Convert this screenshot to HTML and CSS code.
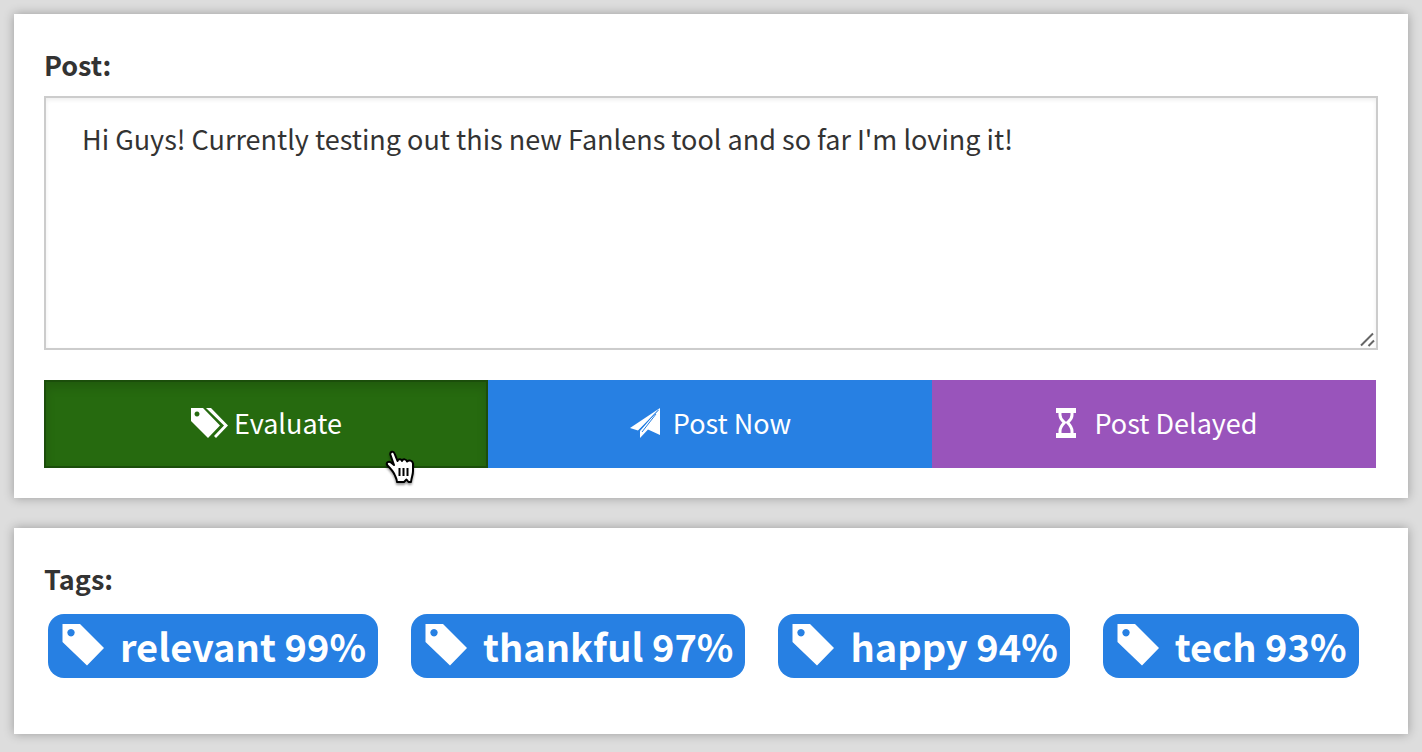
FILE: index.html
```html
<!DOCTYPE html>
<html lang="en">
<head>
<meta charset="utf-8">
<title>Post</title>
<link rel="stylesheet" href="styles.css">
</head>
<body>
<svg class="defs" aria-hidden="true">
  <symbol id="tag" viewBox="0 0 42 42">
    <path fill-rule="evenodd" d="M0.500 0H18L42 24 25 41.500 0.500 18ZM9 5a3.700 3.700 0 1 0 0.010 0Z"/>
  </symbol>
</svg>
<main class="page">
  <section class="panel">
    <label class="heading" for="post">Post:</label>
    <div class="editor">
      <textarea class="post-text" id="post">Hi Guys! Currently testing out this new Fanlens tool and so far I'm loving it!</textarea>
      <svg class="grip" viewBox="0 0 16 16" aria-hidden="true"><path d="M1 13.500 13 1.500M8.500 14 14 8.500"/></svg>
    </div>
    <div class="actions">
      <button class="action evaluate" type="button">
        <svg class="icon-tags" viewBox="0 0 38 30" aria-hidden="true"><path fill-rule="evenodd" d="M1 0H13L30 17.500 18 30 1 13ZM7 3.500a2.500 2.500 0 1 0 0.010 0Z"/><path d="M16 0H21L38 17.500 26 30 24 28 34 17.500Z"/></svg>
        <span>Evaluate</span>
        <svg class="cursor" viewBox="0 0 34 38" aria-hidden="true"><path d="M11.500 24.500C10 21 7.500 18.500 4.500 15.500 2.500 13 5.500 10.500 8 12.500L11 15 7.500 5C6.500 1.500 10.500 0.500 11.500 3.500L14.500 11C15 8.500 18.500 8.500 19 11 20 8.500 23.500 9 24 11.500 26 9.500 29.500 10.500 30 13.500L30 21C30 25 28.500 27 28 32H25.500L23.500 29.500 21 32H14C14 29 12.500 27 11.500 24.500Z"/><path class="creases" d="M16.500 18V26M20.500 18V26M24.500 18V26"/></svg>
      </button>
      <button class="action now" type="button">
        <svg class="icon-plane" viewBox="0 0 32 30" aria-hidden="true"><path d="M1 20 31 0 9 22.500ZM31 0V27L19 21.500 11 30V23Z"/><path class="fold" d="M29.500 2 10 22.500"/><path class="fold" d="M27 6 13 24"/></svg>
        <span>Post Now</span>
      </button>
      <button class="action delayed" type="button">
        <svg class="icon-glass" viewBox="0 0 20 30" aria-hidden="true"><path d="M0 0H20V5H0ZM0 25H20V30H0Z"/><path class="glass" d="M4 4V7C4 11 6.500 12.500 8.500 14.500 6 17 4 19 4 23V26M16 4V7C16 11 13.500 12.500 11.500 14.500 14 17 16 19 16 23V26"/></svg>
        <span>Post Delayed</span>
      </button>
    </div>
  </section>
  <section class="panel results">
    <h2 class="heading">Tags:</h2>
    <ul class="tags">
      <li class="tag"><svg class="icon-tag" aria-hidden="true"><use href="#tag"/></svg><span>relevant 99%</span></li>
      <li class="tag"><svg class="icon-tag" aria-hidden="true"><use href="#tag"/></svg><span>thankful 97%</span></li>
      <li class="tag"><svg class="icon-tag" aria-hidden="true"><use href="#tag"/></svg><span>happy 94%</span></li>
      <li class="tag"><svg class="icon-tag" aria-hidden="true"><use href="#tag"/></svg><span>tech 93%</span></li>
    </ul>
  </section>
</main>
</body>
</html>
```
FILE: styles.css
```css
* { box-sizing: border-box; }
body {
  margin: 0;
  background: #ddd;
  color: #333;
  font-family: "Noto Sans CJK SC", "Open Sans", sans-serif;
  font-size: 27px;
  line-height: 40px;
}
.defs { position: absolute; width: 0; height: 0; }
.page { display: flex; flex-direction: column; gap: 30px; padding: 14px; }
.panel {
  padding: 30px;
  background: #fff;
  box-shadow: 0 0 10px rgba(0, 0, 0, 0.3);
}
.results { padding-bottom: 56px; }
.heading {
  display: block;
  margin: 0 0 10px;
  font-size: 27px;
  font-weight: 700;
  line-height: 42px;
}
.results .heading { margin-bottom: 14px; }
.editor { position: relative; display: flex; }
.post-text {
  width: 100%;
  height: 254px;
  margin: 0;
  padding: 21px 36px;
  border: 2px solid #ccc;
  border-radius: 0;
  outline: 0;
  background: #fff;
  box-shadow: inset 0 2px 4px rgba(0, 0, 0, 0.07);
  color: inherit;
  font: inherit;
  resize: none;
}
.grip {
  position: absolute;
  right: 2px;
  bottom: 2px;
  width: 16px;
  height: 16px;
  fill: none;
  stroke: #666;
  stroke-width: 2;
}
.actions {
  display: grid;
  grid-template-columns: repeat(3, 1fr);
  margin: 30px 2px 0 0;
}
.action {
  position: relative;
  display: flex;
  align-items: center;
  justify-content: center;
  height: 88px;
  padding: 0 0 2px;
  border: 0;
  color: #fff;
  font: inherit;
  cursor: pointer;
}
.action svg { fill: #fff; }
.evaluate {
  gap: 6px;
  border: 2px solid #1b4e0b;
  background: #266a0f;
  box-shadow: inset 0 6px 10px rgba(0, 0, 0, 0.13);
}
.now { gap: 12px; background: #2780e3; }
.delayed { gap: 18px; padding-left: 6px; background: #9954bb; }
.icon-tags { width: 38px; height: 30px; }
.icon-plane { width: 32px; height: 30px; }
.icon-glass { width: 20px; height: 30px; }
.icon-plane .fold { fill: none; stroke: #2780e3; stroke-width: 1; }
.icon-glass .glass { fill: none; stroke: #fff; stroke-width: 3; }
.action .cursor {
  position: absolute;
  right: 69px;
  bottom: -22px;
  width: 34px;
  height: 38px;
  stroke: #000;
  stroke-width: 2;
  stroke-linejoin: round;
  filter: drop-shadow(0 2px 1px rgba(0, 0, 0, 0.4));
}
.cursor .creases { fill: none; }
.tags {
  display: flex;
  flex-wrap: wrap;
  gap: 33px;
  margin: 0;
  padding: 0 4px;
  list-style: none;
}
.tag {
  display: flex;
  gap: 16px;
  height: 64px;
  padding: 10px 12px 10px 14px;
  border-radius: 16px;
  background: #2780e3;
  color: #fff;
  font-size: 38px;
  font-weight: 700;
  line-height: 44px;
}
.icon-tag { width: 42px; height: 42px; fill: #fff; }
```
